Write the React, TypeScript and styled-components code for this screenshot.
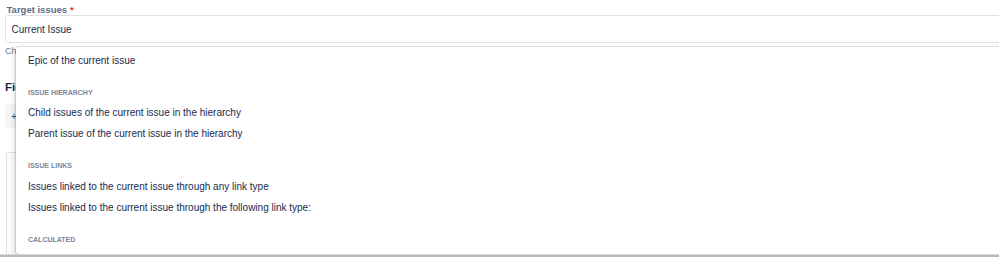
import React from "react";
import styled, { createGlobalStyle } from "styled-components";

const Global = createGlobalStyle`
  html, body { margin: 0; padding: 0; background: #ffffff; overflow: hidden; }
  body { font-family: "Liberation Sans", Arial, sans-serif; color: #172b4d; }
`;

const Page = styled.div`
  position: relative;
  width: 1010px;
  height: 257px;
  padding: 4px 0 0 5px;
  box-sizing: border-box;
  overflow: hidden;
`;

const Label = styled.div`
  font-size: 9.5px;
  line-height: 11px;
  font-weight: 700;
  color: #5e6c84;
  padding-left: 1.5px;
`;

const Required = styled.span`
  color: #de350b;
  margin-left: 3px;
`;

const Input = styled.div`
  height: 28px;
  box-sizing: border-box;
  border: 1.5px solid #dfe1e6;
  border-radius: 3px;
  background: #ffffff;
  display: flex;
  align-items: center;
  padding-left: 5.5px;
  font-size: 10px;
  color: #172b4d;
`;

const Helper = styled.div`
  margin-top: 2px;
  font-size: 9px;
  line-height: 12px;
  color: #6b778c;
`;

const SectionTitle = styled.div`
  margin-top: 23px;
  font-size: 11.5px;
  line-height: 14px;
  font-weight: 700;
  color: #172b4d;
`;

const AddButton = styled.div`
  margin-top: 10px;
  height: 24px;
  width: 90px;
  border-radius: 3px;
  background: #f4f5f7;
  display: flex;
  align-items: center;
  padding-left: 6px;
  font-size: 10px;
  color: #42526e;
  gap: 4px;
`;

const Card = styled.div`
  margin-top: 24px;
  margin-left: 1px;
  height: 140px;
  border: 1px solid #dfe1e6;
  border-radius: 3px;
  background: #fafbfc;
`;

const Menu = styled.div`
  position: absolute;
  left: 16px;
  top: 47px;
  right: 0;
  height: 207px;
  background: #ffffff;
  border-radius: 3px 0 0 3px;
  box-shadow: 0 0 0 1px rgba(9, 30, 66, 0.08), 0 3px 6px rgba(9, 30, 66, 0.2),
    -1px 0 3px rgba(9, 30, 66, 0.1);
  padding-top: 2.5px;
  box-sizing: border-box;
  overflow: hidden;
`;

const Group = styled.div`
  margin-top: 16px;
`;

const GroupHeading = styled.div`
  padding-left: 12px;
  font-size: 7px;
  line-height: 12px;
  font-weight: 700;
  text-transform: uppercase;
  color: #7a869a;
  margin-bottom: 3.5px;
`;

const Item = styled.div`
  padding-left: 12px;
  font-size: 10px;
  line-height: 21px;
  color: #172b4d;
  white-space: nowrap;
`;

const BottomEdge = styled.div`
  position: absolute;
  left: 0;
  right: 0;
  bottom: 0;
  height: 2px;
  background: #b8b8b8;
  border-top: 1px solid #dadada;
`;

export default function App() {
  return (
    <>
      <Global />
      <Page>
        <Label>
          Target issues<Required>*</Required>
        </Label>
        <Input>Current Issue</Input>
        <Helper>Choose which issues will be edited by this action</Helper>
        <SectionTitle>Fields to set</SectionTitle>
        <AddButton>
          <span>+</span>
          <span>Add fields</span>
        </AddButton>
        <Card />
        <Menu>
          <Item>Epic of the current issue</Item>
          <Group>
            <GroupHeading>Issue hierarchy</GroupHeading>
            <Item>Child issues of the current issue in the hierarchy</Item>
            <Item>Parent issue of the current issue in the hierarchy</Item>
          </Group>
          <Group>
            <GroupHeading>Issue links</GroupHeading>
            <Item>Issues linked to the current issue through any link type</Item>
            <Item>Issues linked to the current issue through the following link type:</Item>
          </Group>
          <Group>
            <GroupHeading>Calculated</GroupHeading>
          </Group>
        </Menu>
        <BottomEdge />
      </Page>
    </>
  );
}
